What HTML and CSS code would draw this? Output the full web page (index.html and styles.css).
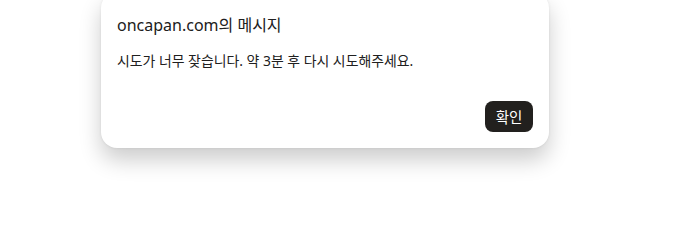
FILE: index.html
```html
<!DOCTYPE html>
<html lang="ko">
<head>
    <meta charset="UTF-8">
    <title>oncapan.com의 메시지</title>
    <link rel="stylesheet" href="styles.css">
</head>
<body>
    <div class="dialogo">
        <div class="titulo">oncapan.com의 메시지</div>
        <p class="mensaje">시도가 너무 잦습니다. 약 3분 후 다시 시도해주세요.</p>
        <div class="acciones">
            <button class="btn-ok">확인</button>
        </div>
    </div>
</body>
</html>
```

FILE: styles.css
```css
html {
    height: 100%;
}

body {
    margin: 0;
    padding-top: 1px;
    min-height: 100%;
    box-sizing: border-box;
    background: #ffffff;
    font-family: "Noto Sans", "Noto Sans CJK KR", sans-serif;
}

/* Caja del dialogo */
.dialogo {
    width: 448px;
    box-sizing: border-box;
    margin: -9px 0 0 101px;
    padding: 22px 16px 16px 16px;
    background: #ffffff;
    border-radius: 16px;
    box-shadow: 0 12px 22px rgba(0, 0, 0, 0.2), 0 0 3px rgba(0, 0, 0, 0.08);
}

.titulo {
    font-size: 16px;
    line-height: 22px;
    color: #202020;
}

.mensaje {
    margin: 15px 0 0 0;
    font-size: 13.9px;
    line-height: 20px;
    color: #202020;
}

.acciones {
    display: flex;
    justify-content: flex-end;
    margin-top: 30px;
}

.btn-ok {
    width: 48px;
    height: 31px;
    padding: 0;
    border: none;
    border-radius: 8px;
    background: #22201e;
    color: #ffffff;
    font-family: inherit;
    font-size: 14.5px;
}
```
